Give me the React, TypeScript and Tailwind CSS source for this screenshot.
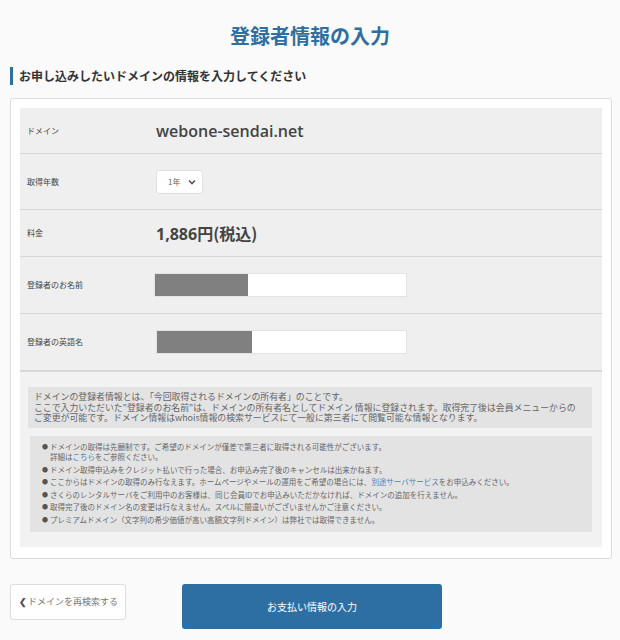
import React from "react";

const jp = { fontFamily: '"Noto Sans CJK JP", "Noto Sans", sans-serif' };

function Row({ label, h, children, last }: { label: string; h: string; children: React.ReactNode; last?: boolean }) {
  return (
    <div className={`flex items-center ${h} ${last ? "" : "border-b border-[#d6d6d6]"}`}>
      <div className="w-[136px] pl-[7px] text-[8px] text-[#444]">{label}</div>
      <div className="flex items-center">{children}</div>
    </div>
  );
}

function Bullet({ children, first }: { children: React.ReactNode; first?: boolean }) {
  return (
    <div className={`flex ${first ? "" : "mt-[2.5px]"}`}>
      <span className="w-[8px] shrink-0 text-[6px] leading-[10px] text-[#555]">●</span>
      <div>{children}</div>
    </div>
  );
}

export default function App() {
  return (
    <div className="w-[620px] h-[640px] bg-[#fafafa] text-[#333] overflow-hidden" style={jp}>
      <div className="pt-[24px] text-center text-[20px] font-bold text-[#2e6fa3] leading-[24px]">登録者情報の入力</div>

      <div className="mt-[19px] ml-[10px] flex items-center h-[18px] border-l-[3px] border-[#2e6fa3] pl-[6px] text-[12px] font-bold text-[#333]">
        お申し込みしたいドメインの情報を入力してください
      </div>

      <div className="mt-[13px] mx-[10px] w-[602px] h-[461px] bg-white border border-[#dcdcdc] rounded-[3px] p-[9px]">
        <div className="bg-[#efefef]">
          <Row label="ドメイン" h="h-[46px]">
            <span className="text-[16px] font-semibold text-[#444]" style={{ fontFamily: '"Open Sans", sans-serif' }}>webone-sendai.net</span>
          </Row>
          <Row label="取得年数" h="h-[56px]">
            <div className="w-[47px] h-[24px] bg-white border border-[#e0e0e0] rounded-[3px] flex items-center justify-between pl-[11px] pr-[6px]">
              <span className="text-[8px] text-[#666]">1年</span>
              <svg width="8" height="6" viewBox="0 0 8 6"><path d="M1 1.5 L4 4.5 L7 1.5" stroke="#555" strokeWidth="1.6" fill="none" /></svg>
            </div>
          </Row>
          <Row label="料金" h="h-[47px]">
            <span className="text-[16px] font-bold text-[#444]">
              <span style={{ fontFamily: '"Open Sans", sans-serif' }}>1,886</span>円(税込)
            </span>
          </Row>
          <Row label="登録者のお名前" h="h-[57px]">
            <div className="-ml-[2px] w-[253px] h-[24px] bg-white border border-[#e2e2e2] flex">
              <div className="w-[93px] h-full bg-[#808080]"></div>
            </div>
          </Row>
          <Row label="登録者の英語名" h="h-[57px]">
            <div className="w-[251px] h-[24px] bg-white border border-[#e2e2e2] flex">
              <div className="w-[95px] h-full bg-[#808080]"></div>
            </div>
          </Row>
        </div>
        <div className="border-t border-[#dadada] bg-[#f2f2f2] pt-[15px] pb-[15px] pl-[8px] pr-[10px]">
          <div className="bg-[#e3e3e3] h-[41px] pt-[5px] pl-[6px] text-[8.9px] leading-[10.5px] text-[#666] whitespace-nowrap">
            <div>ドメインの登録者情報とは、「今回取得されるドメインの所有者」のことです。</div>
            <div>ここで入力いただいた"登録者のお名前"は、ドメインの所有者名としてドメイン 情報に登録されます。取得完了後は会員メニューからの</div>
            <div>ご変更が可能です。ドメイン情報はwhois情報の検索サービスにて一般に第三者にて閲覧可能な情報となります。</div>
          </div>
          <div className="mt-[8px] ml-[2px] bg-[#e3e3e3] h-[96px] pt-[6px] pl-[12px] text-[7.5px] leading-[10px] text-[#666]">
            <Bullet first>ドメインの取得は先願制です。ご希望のドメインが僅差で第三者に取得される可能性がございます。<br />詳細は<span className="text-[#4a7fb8]">こちら</span>をご参照ください。</Bullet>
            <Bullet>ドメイン取得申込みをクレジット払いで行った場合、お申込み完了後のキャンセルは出来かねます。</Bullet>
            <Bullet>ここからはドメインの取得のみ行なえます。ホームページやメールの運用をご希望の場合には、<span className="text-[#4a7fb8]">別途サーバサービス</span>をお申込みください。</Bullet>
            <Bullet>さくらのレンタルサーバをご利用中のお客様は、同じ会員IDでお申込みいただかなければ、ドメインの追加を行えません。</Bullet>
            <Bullet>取得完了後のドメイン名の変更は行なえません。スペルに間違いがございませんかご注意ください。</Bullet>
            <Bullet>プレミアムドメイン（文字列の希少価値が高い高額文字列ドメイン）は弊社では取得できません。</Bullet>
          </div>
        </div>
      </div>

      <div className="mt-[25px] ml-[10px] flex items-start">
        <div className="w-[116px] h-[36px] bg-white border border-[#dcdcdc] rounded-[3px] flex items-center pl-[8px] text-[9px] text-[#777]">
          <span className="text-[#555] font-bold mr-[1px] text-[9px]">❮</span>ドメインを再検索する
        </div>
        <div className="ml-[56px] w-[260px] h-[45px] bg-[#2e6fa3] rounded-[3px] flex items-center justify-center text-[10px] text-white">
          お支払い情報の入力
        </div>
      </div>
    </div>
  );
}
